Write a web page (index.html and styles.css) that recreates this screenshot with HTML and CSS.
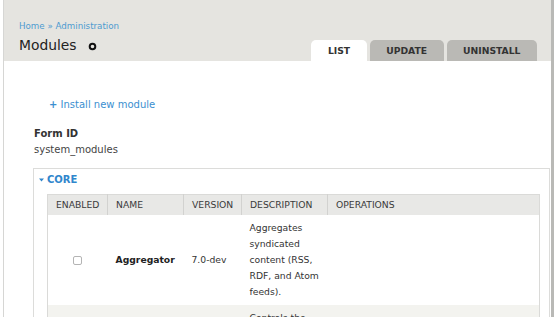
FILE: index.html
```html
<!DOCTYPE html>
<html>
<head>
<meta charset="utf-8">
<link rel="stylesheet" href="styles.css">
</head>
<body>
<div class="frame">
  <div class="header">
    <div class="titles">
      <div class="breadcrumb"><span class="link">Home</span> » <span class="link">Administration</span></div>
      <h1 class="title">Modules <svg class="ring" width="9" height="9" viewBox="0 0 9 9"><circle cx="4.5" cy="4.5" r="2.8" fill="none" stroke="#111" stroke-width="2"/></svg></h1>
    </div>
    <div class="tabs">
      <div class="tab active">LIST</div>
      <div class="tab">UPDATE</div>
      <div class="tab">UNINSTALL</div>
    </div>
  </div>
  <div class="content">
    <div class="install"><span class="plus">+</span> Install new module</div>
    <div class="formid">
      <div class="label">Form ID</div>
      <div>system_modules</div>
    </div>
    <div class="fieldset">
      <div class="legend"><svg width="5" height="4" viewBox="0 0 5 4"><path d="M0 0.5 L5 0.5 L2.5 3.5 Z" fill="#2f86cc"/></svg><span>CORE</span></div>
      <table class="modules">
        <colgroup>
          <col class="c-enabled"><col class="c-name"><col class="c-version"><col class="c-desc"><col class="c-ops">
        </colgroup>
        <thead>
          <tr><th class="first">ENABLED</th><th>NAME</th><th>VERSION</th><th>DESCRIPTION</th><th>OPERATIONS</th></tr>
        </thead>
        <tbody>
          <tr class="odd">
            <td class="check"><span class="checkbox"></span></td>
            <td class="name">Aggregator</td>
            <td>7.0-dev</td>
            <td class="desc">Aggregates syndicated content (RSS, RDF, and Atom feeds).</td>
            <td></td>
          </tr>
          <tr class="even">
            <td class="check"></td>
            <td class="name"></td>
            <td></td>
            <td class="desc">Controls the</td>
            <td></td>
          </tr>
        </tbody>
      </table>
    </div>
  </div>
</div>
</body>
</html>
```
FILE: styles.css
```css
body {
  margin: 0;
  background: #fff;
  font-family: "DejaVu Sans", sans-serif;
  color: #333;
}
.frame {
  margin-left: 3px;
  width: 551px;
  height: 317px;
  box-sizing: border-box;
  border-left: 1px solid #d6d6d4;
  border-right: 3px solid #b9b9b6;
  overflow: hidden;
  font-size: 10px;
}
.header {
  height: 61px;
  background: #e5e4e0;
  display: flex;
  justify-content: space-between;
  padding: 0 14px 0 15px;
  box-sizing: border-box;
}
.titles {
  padding-top: 20px;
}
.breadcrumb {
  font-size: 8.7px;
  line-height: 12px;
  color: #4d9bd0;
}
.title {
  margin: 4px 0 0 0;
  font-size: 13.85px;
  line-height: 18px;
  font-weight: normal;
  color: #222;
  display: flex;
  align-items: center;
  gap: 11px;
}
.ring {
  margin-top: 3px;
}
.tabs {
  display: flex;
  gap: 3px;
  align-self: flex-end;
}
.tab {
  height: 21px;
  line-height: 21px;
  padding: 0 16.5px;
  font-size: 9.23px;
  font-weight: bold;
  color: #333;
  background: #bab9b5;
  border-radius: 5px 5px 0 0;
}
.tab.active {
  background: #fff;
}
.content {
  padding: 36px 0 0 29px;
}
.install {
  line-height: 16px;
  margin: 0 0 13px 16px;
  color: #3b8fd0;
}
.plus {
  font-weight: bold;
}
.formid {
  line-height: 16px;
  padding-left: 1px;
  color: #444;
}
.formid .label {
  font-weight: bold;
  color: #333;
}
.fieldset {
  margin-top: 10px;
  width: 517px;
  height: 200px;
  border: 1px solid #dcdcda;
  box-sizing: border-box;
}
.legend {
  padding: 5px 0 0 5px;
  line-height: 12px;
  font-weight: bold;
  color: #2f86cc;
  display: flex;
  align-items: center;
  gap: 3px;
}
.modules {
  margin: 8px 0 0 13px;
  width: 492px;
  table-layout: fixed;
  border-collapse: collapse;
  font-size: 9.23px;
  border: 1px solid #dadad8;
}
.c-enabled { width: 60px; }
.c-name { width: 76px; }
.c-version { width: 58px; }
.c-desc { width: 86px; }
.c-ops { width: 212px; }
.modules th {
  background: #e8e8e6;
  font-weight: normal;
  text-align: left;
  line-height: 20px;
  padding: 0 4px 0 8px;
  border-left: 1px solid #d2d2d0;
  color: #3a3a3a;
  white-space: nowrap;
}
.modules th.first {
  border-left: none;
}
.modules td {
  padding: 5px 4px 5px 8px;
  line-height: 16px;
  vertical-align: middle;
  color: #333;
}
.modules tr.even td {
  vertical-align: top;
}
.modules tr.odd td {
  background: #fff;
}
.modules tr.even td {
  background: #f3f3ef;
}
.modules td.check {
  text-align: center;
  padding: 0;
}
.checkbox {
  display: inline-block;
  width: 9px;
  height: 9px;
  box-sizing: border-box;
  border: 1px solid #b4b4b4;
  border-radius: 2px;
  background: #fff;
  vertical-align: middle;
}
.modules td.name {
  font-weight: bold;
  color: #222;
}
```
